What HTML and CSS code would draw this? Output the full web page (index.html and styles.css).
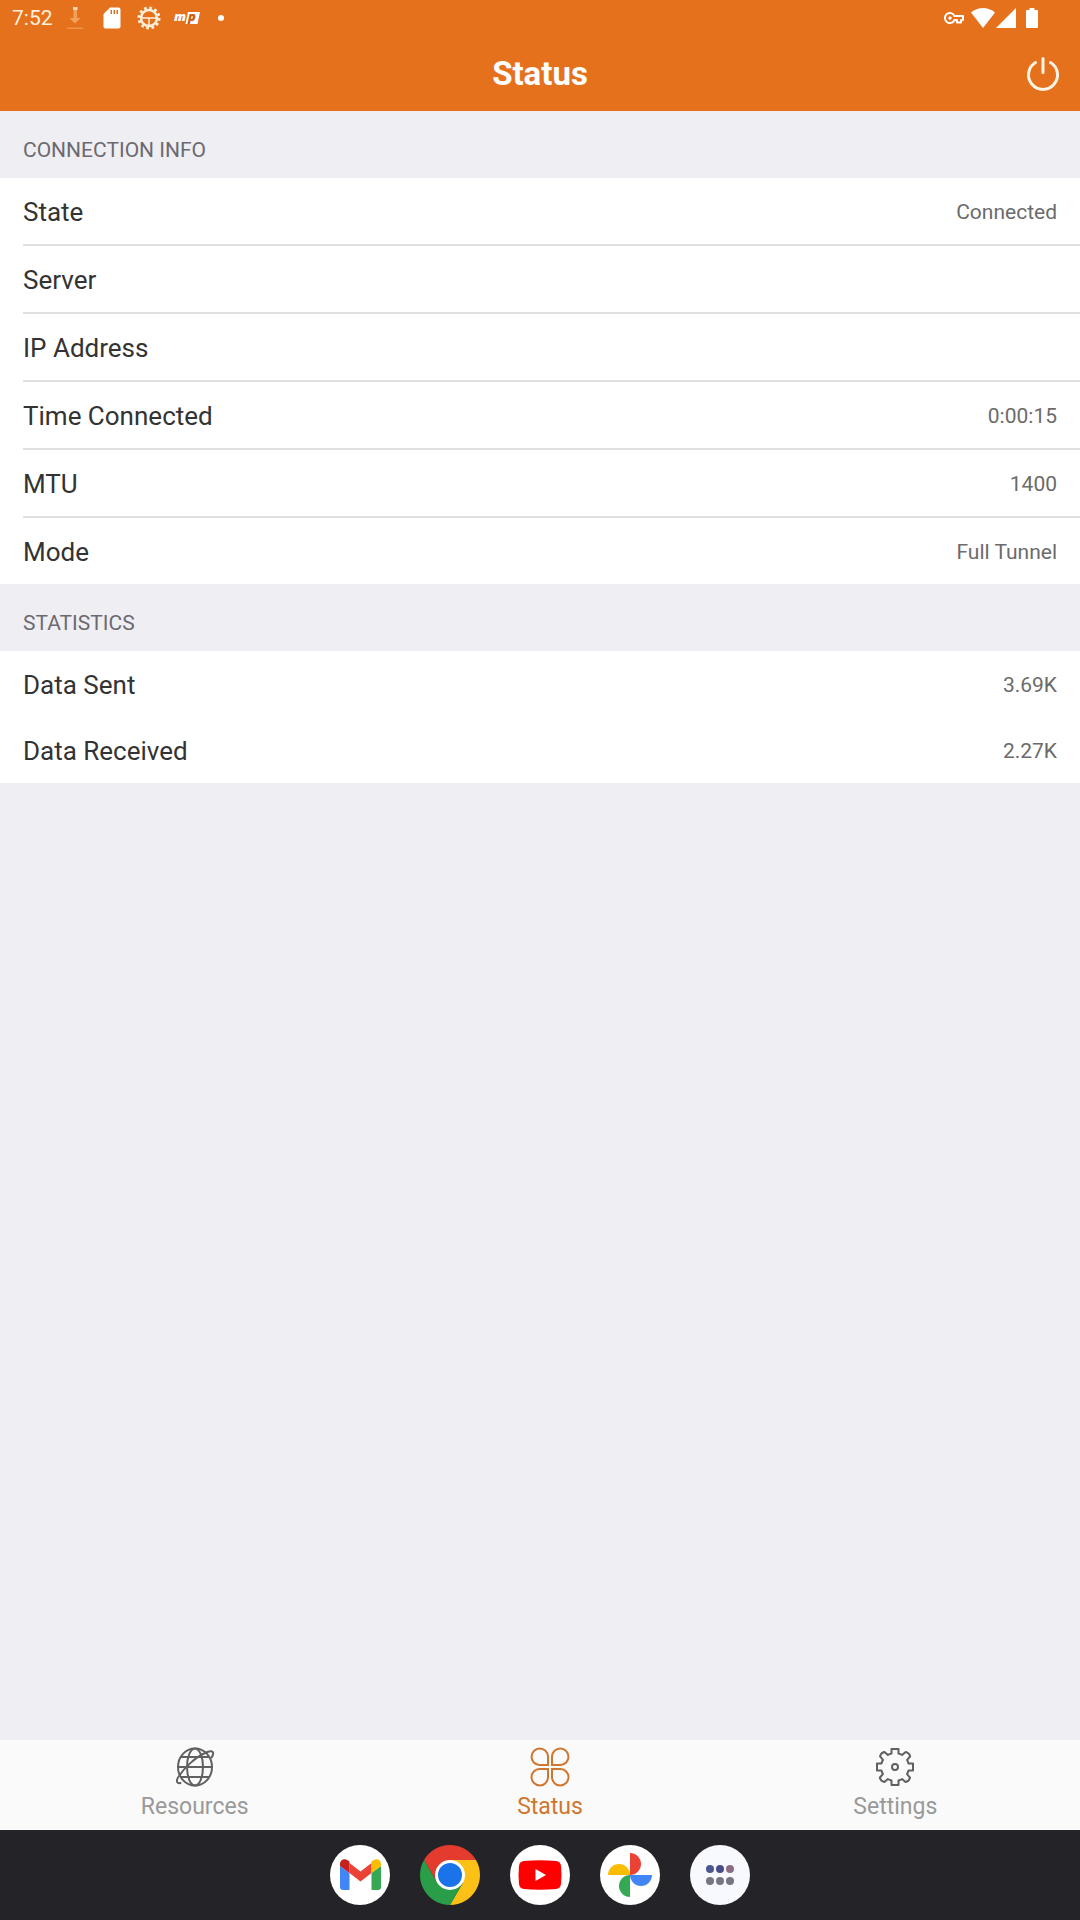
FILE: index.html
```html
<!DOCTYPE html>
<html lang="en">
<head>
<meta charset="utf-8">
<meta name="viewport" content="width=device-width, initial-scale=1">
<title>Status</title>
<link rel="stylesheet" href="styles.css">
</head>
<body>
<div class="screen">
  <header class="top">
    <div class="system-bar">
      <div class="system-left">
        <span class="clock">7:52</span>
        <svg class="sys-icon" viewBox="0 0 24 24" aria-hidden="true"><g fill="#f3a05a"><path d="M10 1h4.500v3H10z" fill="#fbd5b5"/><path d="M10.500 4h3.500v8h3.500L12 17.500 6.500 12h4z"/><path d="M4 21.500h16V23H4z" fill="#f0924a"/></g></svg>
        <svg class="sys-icon" viewBox="0 0 24 24" aria-hidden="true"><path fill="#fff" fill-rule="evenodd" d="M10 1.500h8.500a2 2 0 0 1 2 2v17a2 2 0 0 1-2 2h-13a2 2 0 0 1-2-2V8zM10.500 4v4H12V4zm3 0v4H15V4zm3 0v4H18V4z"/></svg>
        <svg class="sys-icon" viewBox="0 0 24 24" aria-hidden="true"><g fill="none" stroke="#fff0dc"><circle cx="12" cy="12" r="8" stroke-width="2.500"/><circle cx="12" cy="12" r="10" stroke-width="3" stroke-dasharray="2.620 2.620"/><path d="M5 12h14" stroke-width="1.500"/><path d="M12 12v7" stroke-width="1.500"/></g></svg>
        <svg class="mp-icon" viewBox="0 0 26 24" aria-hidden="true"><path fill="#fff" d="M14 6h12l-2.500 12H11.500z"/><text class="mp-letter" x="0" y="15" fill="#fff">m</text><text class="mp-letter" x="14" y="15" fill="#c8601a">p</text></svg>
        <span class="dot"></span>
      </div>
      <div class="system-right">
        <svg class="key-icon" viewBox="0 0 20 12" aria-hidden="true"><path fill="none" stroke="#fff" stroke-width="2" stroke-linejoin="round" d="M10.500 4A5 5 0 1 0 10.500 8H13v2.500h4V8h2V4z"/><circle cx="6" cy="6" r="1.700" fill="#fff"/></svg>
        <svg class="wifi-icon" viewBox="0 0 24 20" aria-hidden="true"><path fill="#fff" d="M0 4.500C7-1.500 17-1.500 24 4.500L12 20z"/></svg>
        <svg class="signal-icon" viewBox="0 0 20 20" aria-hidden="true"><path fill="#fff" d="M20 0v20H0z"/></svg>
        <svg class="battery-icon" viewBox="0 0 12 20" aria-hidden="true"><path fill="#fff" d="M3.500 0h5v2H11a1 1 0 0 1 1 1v16a1 1 0 0 1-1 1H1a1 1 0 0 1-1-1V3a1 1 0 0 1 1-1h2.500z"/></svg>
      </div>
    </div>
    <div class="title-bar">
      <h1 class="title">Status</h1>
      <button class="power" type="button" aria-label="Disconnect">
        <svg viewBox="0 0 36 36" aria-hidden="true"><path fill="none" stroke="#fff4e6" stroke-width="3" stroke-linecap="round" d="M18 2.500v14M10.500 6.500a14.500 14.500 0 1 0 15 0"/></svg>
      </button>
    </div>
  </header>

  <main class="content">
    <section>
      <h2 class="section-title">CONNECTION INFO</h2>
      <dl class="list">
        <div class="row"><dt>State</dt><dd>Connected</dd></div>
        <div class="row"><dt>Server</dt><dd></dd></div>
        <div class="row"><dt>IP Address</dt><dd></dd></div>
        <div class="row"><dt>Time Connected</dt><dd>0:00:15</dd></div>
        <div class="row"><dt>MTU</dt><dd>1400</dd></div>
        <div class="row"><dt>Mode</dt><dd>Full Tunnel</dd></div>
      </dl>
    </section>
    <section>
      <h2 class="section-title">STATISTICS</h2>
      <dl class="list plain">
        <div class="row"><dt>Data Sent</dt><dd>3.69K</dd></div>
        <div class="row"><dt>Data Received</dt><dd>2.27K</dd></div>
      </dl>
    </section>
  </main>

  <nav class="tabs">
    <a class="tab" href="#resources">
      <svg class="tab-icon" viewBox="0 0 40 40" aria-hidden="true"><g fill="none" stroke="#606060" stroke-width="2" stroke-linecap="round"><ellipse cx="20" cy="20" rx="17" ry="18.500"/><ellipse cx="20" cy="20" rx="8" ry="18.500"/><path d="M3 20h34M6.500 10h27M6.500 30h27"/><path d="M5.500 36C1 37 1 33 4 29 10 20 21 10 30 6c5-2.500 9-2.500 8 1.500-.3 1.500-1 2-1.500 3"/></g></svg>
      <span>Resources</span>
    </a>
    <a class="tab active" href="#status" aria-current="page">
      <svg class="tab-icon" viewBox="0 0 40 40" aria-hidden="true"><path fill="none" stroke="#d0762f" stroke-width="2" d="M18 18h-8.500A8.250 8.250 0 1 1 18 9.500zM22 18V9.500A8.250 8.250 0 1 1 30.500 18zM18 22v8.500A8.250 8.250 0 1 1 9.500 22zM22 22h8.500A8.250 8.250 0 1 1 22 30.500z"/></svg>
      <span>Status</span>
    </a>
    <a class="tab" href="#settings">
      <svg class="tab-icon" viewBox="-20 -20 40 40" aria-hidden="true"><g fill="none" stroke="#606060" stroke-width="2" stroke-linejoin="round"><path d="M-3.500-13.500V-18h7v4.500Q5.500-13 7.100-12l3.500-3q4 1 4.500 4.500l-3 3.400Q13-5.500 13.500-3.500H18v7h-4.500Q13 5.500 12 7.100l3 3.500q-1 4-4.500 4.500l-3.400-3Q5.500 13 3.500 13.500V18h-7v-4.500Q-5.500 13-7.100 12l-3.500 3q-4-1-4.500-4.500l3-3.400Q-13 5.500-13.500 3.500H-18v-7h4.500Q-13-5.500-12-7.100l-3-3.500q1-4 4.500-4.500l3.400 3Q-5.500-13-3.500-13.500z"/><circle r="3"/></g></svg>
      <span>Settings</span>
    </a>
  </nav>

  <nav class="dock" aria-label="Apps">
    <button class="app" type="button" aria-label="Gmail"><svg viewBox="0 0 60 60" aria-hidden="true"><circle cx="30" cy="30" r="30" fill="#fff"/><path fill="#4285f4" d="M10 21l9.500 7v17H13a3 3 0 0 1-3-3z"/><path fill="#34a853" d="M41.500 28l9.500-7v21a3 3 0 0 1-3 3h-6.500z"/><path fill="#ea4335" d="M19.500 18l11 8.500 11-8.500v10l-11 8.500-11-8.500z"/><path fill="#c5221f" d="M10 21v-2c0-4.500 4.500-6 8-3.500l1.500 1V28z"/><path fill="#fbbc04" d="M51 21v-2c0-4.500-4.500-6-8-3.500l-1.500 1V28z"/></svg></button>
    <button class="app" type="button" aria-label="Chrome"><svg viewBox="0 0 60 60" aria-hidden="true"><path fill="#e33b2e" d="M4.020 15A30 30 0 0 1 55.980 15H30L17 37.500z"/><path fill="#fbc116" d="M55.980 15A30 30 0 0 1 30 60L43 37.500 30 15z"/><path fill="#2a9d48" d="M30 60A30 30 0 0 1 4.020 15L17 37.500 30 45l13-7.500z"/><circle cx="30" cy="30" r="15" fill="#fff"/><circle cx="30" cy="30" r="12" fill="#1a73e8"/></svg></button>
    <button class="app" type="button" aria-label="YouTube"><svg viewBox="0 0 60 60" aria-hidden="true"><circle cx="30" cy="30" r="30" fill="#fff"/><path fill="#f00" d="M14 16q16-1.500 32 0 4.500.5 5 5 1 9 0 18-.5 4.500-5 5-16 1.500-32 0-4.500-.5-5-5-1-9 0-18 .5-4.500 5-5z"/><path fill="#fff" d="M25.500 24v12L36 30z"/></svg></button>
    <button class="app" type="button" aria-label="Photos"><svg viewBox="0 0 60 60" aria-hidden="true"><circle cx="30" cy="30" r="30" fill="#fff"/><path fill="#ea4335" d="M30 8a11 11 0 0 1 0 22z"/><path fill="#4285f4" d="M52 30a11 11 0 0 1-22 0z"/><path fill="#34a853" d="M30 52a11 11 0 0 1 0-22z"/><path fill="#fbbc04" d="M8 30a11 11 0 0 1 22 0z"/></svg></button>
    <button class="app" type="button" aria-label="All apps"><svg viewBox="0 0 60 60" aria-hidden="true"><circle cx="30" cy="30" r="30" fill="#f8f8ff"/><g fill="#777581"><circle cx="20" cy="24" r="4" fill="#4a5592"/><circle cx="30" cy="24" r="4" fill="#4a4b8b"/><circle cx="40" cy="24" r="4" fill="#8b6d84"/><circle cx="20" cy="36" r="4"/><circle cx="30" cy="36" r="4"/><circle cx="40" cy="36" r="4"/></g></svg></button>
  </nav>
</div>
</body>
</html>
```
FILE: styles.css
```css
* { box-sizing: border-box; }

body {
  margin: 0;
  background: #efeef3;
  color: #333;
  font-family: Roboto, "Liberation Sans", sans-serif;
}

.screen {
  display: flex;
  flex-direction: column;
  min-height: 100vh;
}

svg { display: block; }

button {
  padding: 0;
  border: 0;
  background: none;
}

/* Header */
.top {
  background: #e6711c;
  color: #fff;
}

.system-bar {
  display: flex;
  justify-content: space-between;
  align-items: center;
  height: 36px;
  padding: 0 42px 0 12px;
}

.system-left {
  display: flex;
  align-items: center;
  gap: 13px;
}

.clock {
  width: 38px;
  white-space: nowrap;
  font-size: 21px;
  line-height: 24px;
  color: #fff0dc;
}

.sys-icon { width: 24px; height: 24px; }
.mp-icon { width: 26px; height: 24px; }

.mp-letter {
  font-family: "Open Sans", sans-serif;
  font-size: 13px;
  font-style: italic;
  font-weight: 800;
}

.dot {
  width: 6px;
  height: 6px;
  margin-left: 5px;
  border-radius: 50%;
  background: #fff;
}

.system-right {
  display: flex;
  align-items: center;
}

.key-icon { width: 20px; height: 12px; margin-right: 7px; }
.wifi-icon { width: 24px; height: 20px; margin-right: 1px; }
.signal-icon { width: 20px; height: 20px; margin-right: 10px; }
.battery-icon { width: 12px; height: 20px; }

.title-bar {
  display: grid;
  grid-template-columns: 1fr auto 1fr;
  align-items: center;
  height: 75px;
  padding: 0 19px;
}

.title {
  grid-column: 2;
  margin: 0;
  font-size: 33px;
  line-height: 38px;
  font-weight: 700;
}

.power { justify-self: end; }
.power svg { width: 36px; height: 36px; }

/* Lists */
.content { flex: 1; }

.section-title {
  margin: 0;
  padding: 27px 23px 16px;
  font-size: 21px;
  line-height: 24px;
  font-weight: 400;
  color: #6b6a70;
}

.list {
  margin: 0;
  padding-left: 23px;
  background: #fff;
}

.row {
  display: flex;
  justify-content: space-between;
  align-items: center;
  height: 68px;
  padding: 2px 23px 0 0;
  border-bottom: 2px solid #e0e0e0;
}

.row:last-child,
.plain .row {
  height: 66px;
  border-bottom: 0;
}

dt {
  font-size: 26px;
  line-height: 32px;
}

dd {
  margin: 0;
  font-size: 21px;
  line-height: 24px;
  color: #6b6b6b;
}

/* Bottom tabs */
.tabs {
  display: grid;
  grid-template-columns: 389fr 321fr 369fr;
  background: #fafafa;
}

.tab {
  display: flex;
  flex-direction: column;
  align-items: center;
  gap: 6px;
  padding: 7px 0 9px;
  font-size: 23px;
  line-height: 28px;
  color: #999;
  text-decoration: none;
}

.tab.active { color: #d0762f; }
.tab-icon { width: 40px; height: 40px; }

/* Launcher dock */
.dock {
  display: flex;
  justify-content: center;
  gap: 30px;
  padding: 15px 0;
  background: #242327;
}

.app {
  width: 60px;
  height: 60px;
  border-radius: 50%;
}
```
